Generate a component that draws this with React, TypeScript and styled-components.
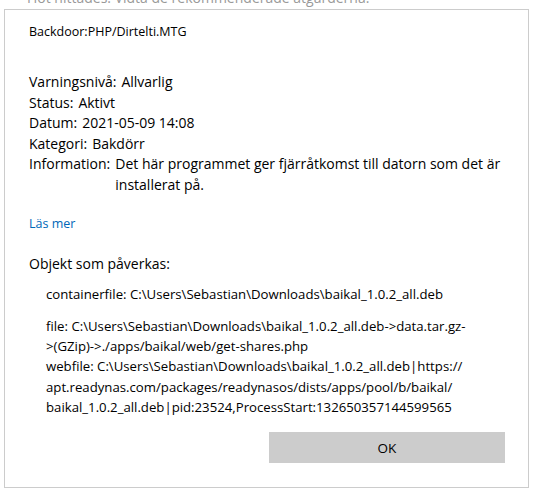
import React from "react";
import styled, { createGlobalStyle } from "styled-components";

const GlobalStyle = createGlobalStyle`
  html, body {
    margin: 0;
    padding: 0;
    background: #ffffff;
  }
  body {
    font-family: "Open Sans", "Noto Sans", sans-serif;
    color: #000000;
  }
`;

const Page = styled.div`
  width: 544px;
  height: 497px;
  overflow: hidden;
  padding: 0 15px 0 4px;
  box-sizing: border-box;
`;

const HiddenHeader = styled.div`
  margin: -12px 0 0 23px;
  height: 21px;
  font-size: 14px;
  line-height: 20px;
  color: #999999;
  white-space: nowrap;
`;

const Dialog = styled.section`
  border: 1px solid #cccccc;
  height: 479px;
  box-sizing: border-box;
  padding: 12px 23px 24px 24px;
  display: flex;
  flex-direction: column;
`;

const Title = styled.div`
  font-size: 12.5px;
  line-height: 20px;
  margin-bottom: 30px;
`;

const Facts = styled.dl`
  margin: 0;
  display: flex;
  flex-direction: column;
  font-size: 14px;
  line-height: 20.6px;
`;

const FactRow = styled.div`
  display: flex;
`;

const Label = styled.dt`
  flex: none;
  margin-right: 5px;
`;

const Value = styled.dd`
  margin: 0;
`;

const MoreLink = styled.a`
  margin-top: 18px;
  font-size: 12.5px;
  line-height: 20px;
  color: #0067b8;
  text-decoration: none;
`;

const SectionHeading = styled.div`
  margin-top: 20px;
  font-size: 14px;
  line-height: 20px;
`;

const Objects = styled.ul`
  list-style: none;
  margin: 10px 0 0;
  padding: 0 0 0 17px;
  font-size: 13.2px;
  line-height: 20.3px;
  white-space: nowrap;
`;

const ObjectItem = styled.li<{ $gap: number }>`
  margin-top: ${(p) => p.$gap}px;
`;

const Footer = styled.div`
  margin-top: auto;
  display: flex;
  justify-content: flex-end;
`;

const OkButton = styled.button`
  width: 236px;
  height: 31px;
  border: none;
  background: #cccccc;
  font-family: inherit;
  font-size: 13.5px;
  color: #000000;
  padding: 0;
`;

const facts = [
  { label: "Varningsnivå:", value: "Allvarlig" },
  { label: "Status:", value: "Aktivt" },
  { label: "Datum:", value: "2021-05-09 14:08" },
  { label: "Kategori:", value: "Bakdörr" },
  {
    label: "Information:",
    value: "Det här programmet ger fjärråtkomst till datorn som det är installerat på.",
  },
];

const objects = [
  { gap: 0, lines: ["containerfile: C:\\Users\\Sebastian\\Downloads\\baikal_1.0.2_all.deb"] },
  {
    gap: 12,
    lines: [
      "file: C:\\Users\\Sebastian\\Downloads\\baikal_1.0.2_all.deb->data.tar.gz-",
      ">(GZip)->./apps/baikal/web/get-shares.php",
    ],
  },
  {
    gap: 0,
    lines: [
      "webfile: C:\\Users\\Sebastian\\Downloads\\baikal_1.0.2_all.deb|https://",
      "apt.readynas.com/packages/readynasos/dists/apps/pool/b/baikal/",
      "baikal_1.0.2_all.deb|pid:23524,ProcessStart:132650357144599565",
    ],
  },
];

export default function App() {
  return (
    <Page>
      <GlobalStyle />
      <HiddenHeader>Hot hittades. Vidta de rekommenderade åtgärderna.</HiddenHeader>
      <Dialog>
        <Title>Backdoor:PHP/Dirtelti.MTG</Title>
        <Facts>
          {facts.map((f) => (
            <FactRow key={f.label}>
              <Label>{f.label}</Label>
              <Value>{f.value}</Value>
            </FactRow>
          ))}
        </Facts>
        <MoreLink href="#">Läs mer</MoreLink>
        <SectionHeading>Objekt som påverkas:</SectionHeading>
        <Objects>
          {objects.map((o, i) => (
            <ObjectItem key={i} $gap={o.gap}>
              {o.lines.map((l, j) => (
                <div key={j}>{l}</div>
              ))}
            </ObjectItem>
          ))}
        </Objects>
        <Footer>
          <OkButton>OK</OkButton>
        </Footer>
      </Dialog>
    </Page>
  );
}
